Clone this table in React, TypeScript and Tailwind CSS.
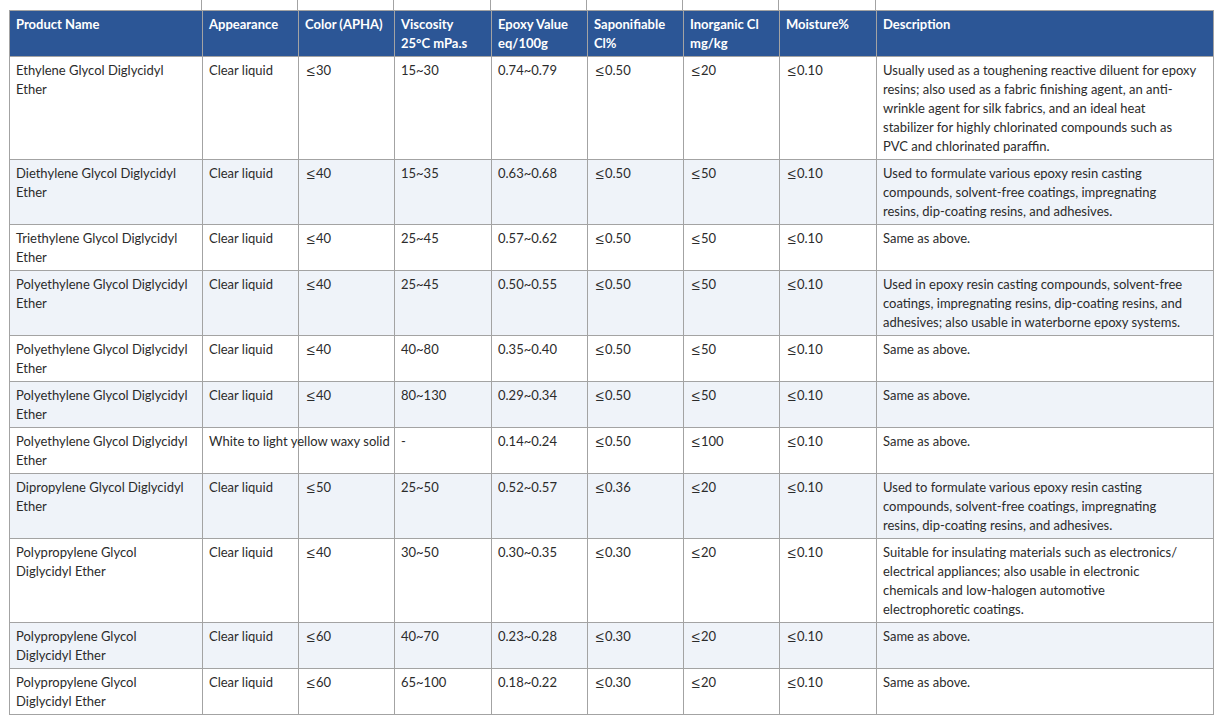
import React from "react";

const LE = () => (
  <span className="inline-block w-[11px] text-center font-['Noto_Sans',sans-serif] text-[15px] leading-[19px] align-top">
    ≤
  </span>
);

const header: string[][] = [
  ["Product Name"],
  ["Appearance"],
  ["Color (APHA)"],
  ["Viscosity", "25°C mPa.s"],
  ["Epoxy Value", "eq/100g"],
  ["Saponifiable", "Cl%"],
  ["Inorganic Cl", "mg/kg"],
  ["Moisture%"],
  ["Description"],
];

const same = ["Same as above."];
const formulate = [
  "Used to formulate various epoxy resin casting",
  "compounds, solvent-free coatings, impregnating",
  "resins, dip-coating resins, and adhesives.",
];
const peg = ["Polyethylene Glycol Diglycidyl", "Ether"];
const ppg = ["Polypropylene Glycol", "Diglycidyl Ether"];

const rows: string[][][] = [
  [
    ["Ethylene Glycol Diglycidyl", "Ether"],
    ["Clear liquid"],
    ["≤30"],
    ["15~30"],
    ["0.74~0.79"],
    ["≤0.50"],
    ["≤20"],
    ["≤0.10"],
    [
      "Usually used as a toughening reactive diluent for epoxy",
      "resins; also used as a fabric finishing agent, an anti-",
      "wrinkle agent for silk fabrics, and an ideal heat",
      "stabilizer for highly chlorinated compounds such as",
      "PVC and chlorinated paraffin.",
    ],
  ],
  [
    ["Diethylene Glycol Diglycidyl", "Ether"],
    ["Clear liquid"],
    ["≤40"],
    ["15~35"],
    ["0.63~0.68"],
    ["≤0.50"],
    ["≤50"],
    ["≤0.10"],
    formulate,
  ],
  [
    ["Triethylene Glycol Diglycidyl", "Ether"],
    ["Clear liquid"],
    ["≤40"],
    ["25~45"],
    ["0.57~0.62"],
    ["≤0.50"],
    ["≤50"],
    ["≤0.10"],
    same,
  ],
  [
    peg,
    ["Clear liquid"],
    ["≤40"],
    ["25~45"],
    ["0.50~0.55"],
    ["≤0.50"],
    ["≤50"],
    ["≤0.10"],
    [
      "Used in epoxy resin casting compounds, solvent-free",
      "coatings, impregnating resins, dip-coating resins, and",
      "adhesives; also usable in waterborne epoxy systems.",
    ],
  ],
  [peg, ["Clear liquid"], ["≤40"], ["40~80"], ["0.35~0.40"], ["≤0.50"], ["≤50"], ["≤0.10"], same],
  [peg, ["Clear liquid"], ["≤40"], ["80~130"], ["0.29~0.34"], ["≤0.50"], ["≤50"], ["≤0.10"], same],
  [
    peg,
    ["White to light yellow waxy solid"],
    [""],
    ["-"],
    ["0.14~0.24"],
    ["≤0.50"],
    ["≤100"],
    ["≤0.10"],
    same,
  ],
  [
    ["Dipropylene Glycol Diglycidyl", "Ether"],
    ["Clear liquid"],
    ["≤50"],
    ["25~50"],
    ["0.52~0.57"],
    ["≤0.36"],
    ["≤20"],
    ["≤0.10"],
    formulate,
  ],
  [
    ppg,
    ["Clear liquid"],
    ["≤40"],
    ["30~50"],
    ["0.30~0.35"],
    ["≤0.30"],
    ["≤20"],
    ["≤0.10"],
    [
      "Suitable for insulating materials such as electronics/",
      "electrical appliances; also usable in electronic",
      "chemicals and low-halogen automotive",
      "electrophoretic coatings.",
    ],
  ],
  [ppg, ["Clear liquid"], ["≤60"], ["40~70"], ["0.23~0.28"], ["≤0.30"], ["≤20"], ["≤0.10"], same],
  [ppg, ["Clear liquid"], ["≤60"], ["65~100"], ["0.18~0.22"], ["≤0.30"], ["≤20"], ["≤0.10"], same],
];

function Line({ text }: { text: string }) {
  if (text.startsWith("≤")) {
    return (
      <div className="whitespace-nowrap">
        <LE />
        {text.slice(1)}
      </div>
    );
  }
  return <div className="whitespace-nowrap">{text || "\u00a0"}</div>;
}

const gridCols = "grid grid-cols-[193px_96px_96px_97px_96px_96px_96px_97px_337px]";

export default function App() {
  return (
    <div className="bg-white w-[1221px] h-[728px] overflow-hidden font-['Lato',sans-serif] text-[13px] leading-[19px] text-[#2b2b2b] pl-[9px]">
      <div className={`${gridCols} h-[10px]`}>
        {header.map((_, i) => (
          <div key={i} className={i < 8 ? "border-r border-[#a3a3a3]" : ""} />
        ))}
      </div>
      <div className={`${gridCols} border-l border-t border-[#a3a3a3] w-[1205px]`}>
        {header.map((h, i) => (
          <div
            key={`h${i}`}
            className="bg-[#2c5696] text-white font-bold border-r border-b border-[#a3a3a3] px-[6px] pt-[4px] pb-[3px]"
          >
            {h.map((l, j) => (
              <div key={j} className="whitespace-nowrap">
                {l}
              </div>
            ))}
          </div>
        ))}
        {rows.map((r, ri) =>
          r.map((cell, ci) => (
            <div
              key={`${ri}-${ci}`}
              className={`border-r border-b border-[#a3a3a3] px-[6px] pt-[4px] pb-[3px] ${
                ri % 2 === 1 ? "bg-[#eff3f9]" : ""
              }`}
            >
              {cell.map((l, j) => (
                <Line key={j} text={l} />
              ))}
            </div>
          ))
        )}
      </div>
    </div>
  );
}
